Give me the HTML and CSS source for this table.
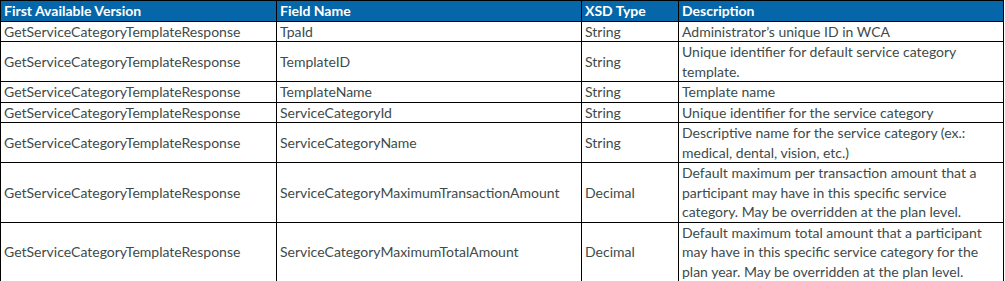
FILE: index.html
```html
<!DOCTYPE html>
<html>
<head>
<meta charset="utf-8">
<link rel="stylesheet" href="styles.css">
</head>
<body>
<table class="grid">
  <colgroup>
    <col class="c1"><col class="c2"><col class="c3"><col class="c4">
  </colgroup>
  <thead>
    <tr class="r1">
      <th>First Available Version</th>
      <th>Field Name</th>
      <th>XSD Type</th>
      <th>Description</th>
    </tr>
  </thead>
  <tbody>
    <tr class="r1">
      <td>GetServiceCategoryTemplateResponse</td>
      <td>TpaId</td>
      <td>String</td>
      <td>Administrator’s unique ID in WCA</td>
    </tr>
    <tr class="r2">
      <td>GetServiceCategoryTemplateResponse</td>
      <td>TemplateID</td>
      <td>String</td>
      <td>Unique identifier for default service category<br>template.</td>
    </tr>
    <tr class="r1">
      <td>GetServiceCategoryTemplateResponse</td>
      <td>TemplateName</td>
      <td>String</td>
      <td>Template name</td>
    </tr>
    <tr class="r1">
      <td>GetServiceCategoryTemplateResponse</td>
      <td>ServiceCategoryId</td>
      <td>String</td>
      <td>Unique identifier for the service category</td>
    </tr>
    <tr class="r2">
      <td>GetServiceCategoryTemplateResponse</td>
      <td>ServiceCategoryName</td>
      <td>String</td>
      <td>Descriptive name for the service category (ex.:<br>medical, dental, vision, etc.)</td>
    </tr>
    <tr class="r3">
      <td>GetServiceCategoryTemplateResponse</td>
      <td>ServiceCategoryMaximumTransactionAmount</td>
      <td>Decimal</td>
      <td>Default maximum per transaction amount that a<br>participant may have in this specific service<br>category. May be overridden at the plan level.</td>
    </tr>
    <tr class="r3">
      <td>GetServiceCategoryTemplateResponse</td>
      <td>ServiceCategoryMaximumTotalAmount</td>
      <td>Decimal</td>
      <td>Default maximum total amount that a participant<br>may have in this specific service category for the<br>plan year. May be overridden at the plan level.</td>
    </tr>
  </tbody>
</table>
</body>
</html>
```

FILE: styles.css
```css
html, body {
  margin: 0;
  padding: 0;
  background: #ffffff;
}

.grid {
  border-collapse: collapse;
  table-layout: fixed;
  width: 1003px;
  font-family: Lato, "Open Sans", sans-serif;
  font-size: 14px;
  color: #3d4b4b;
}

.c1 { width: 276px; }
.c2 { width: 305px; }
.c3 { width: 97px; }
.c4 { width: 325px; }

.grid th,
.grid td {
  border: 1px solid #000000;
  padding: 0 3px;
  line-height: 19.5px;
  vertical-align: middle;
  text-align: left;
  white-space: nowrap;
  overflow: hidden;
}

.grid th {
  background: #0567a9;
  color: #ffffff;
  font-weight: bold;
}

.r1 { height: 20px; }
.r2 { height: 40px; }
.r3 { height: 59px; }
```
